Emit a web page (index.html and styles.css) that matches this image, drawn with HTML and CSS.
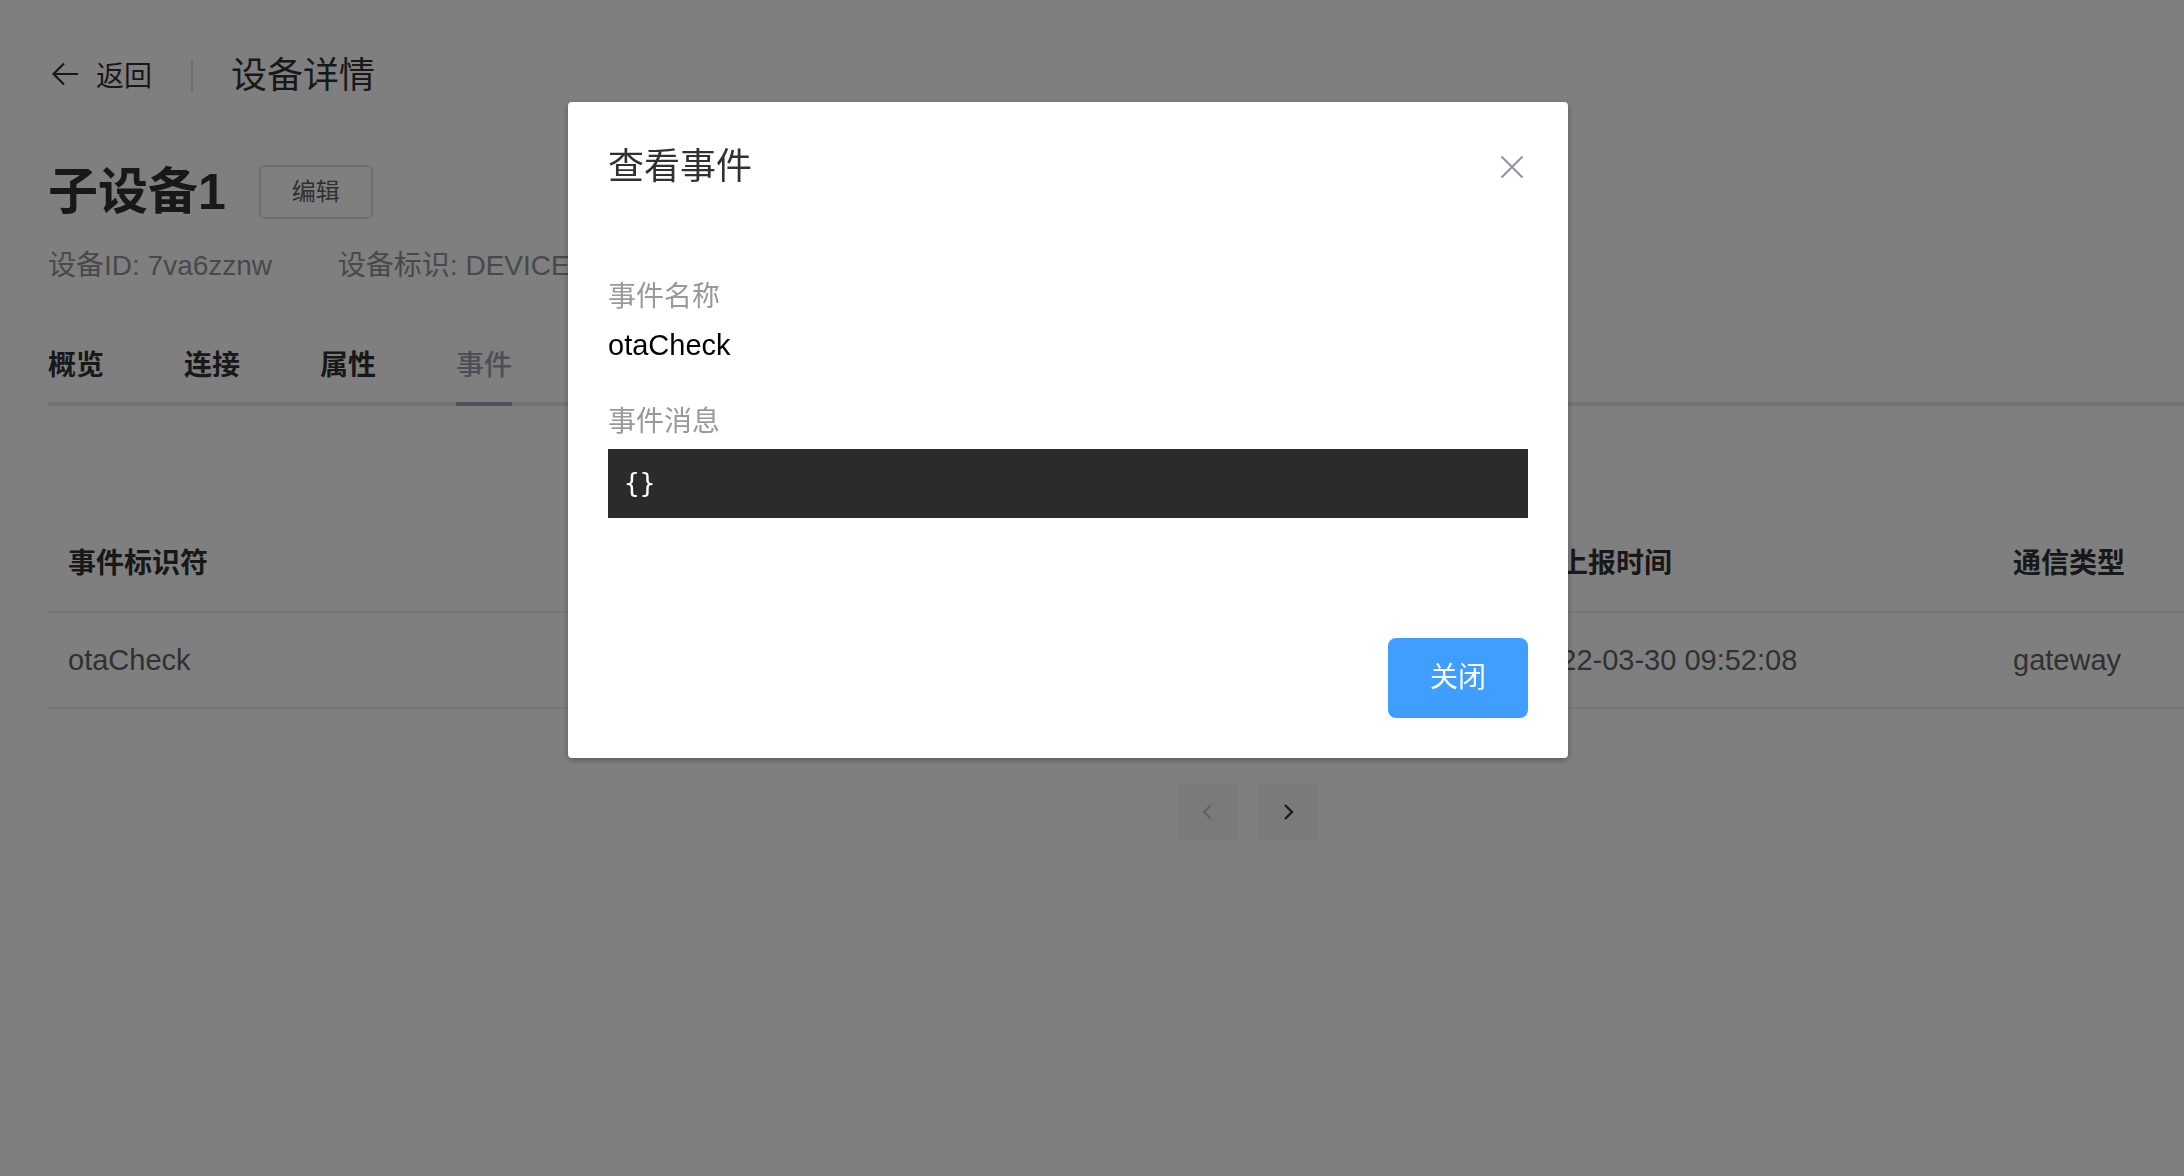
FILE: index.html
```html
<!DOCTYPE html>
<html lang="zh-CN">
<head>
  <meta charset="utf-8">
  <title>设备详情</title>
  <link rel="stylesheet" href="styles.css">
</head>
<body>

  <div class="page">
    <div class="page-header">
      <a class="back">
        <svg class="back-icon" width="36" height="36" viewBox="0 0 36 36">
          <path d="M30 18H6M16 7.5L5.5 18 16 28.5" fill="none" stroke="#303133" stroke-width="2.2"/>
        </svg>
        <span>返回</span>
      </a>
      <span class="divider"></span>
      <span class="page-title">设备详情</span>
    </div>

    <div class="device-head">
      <h1 class="device-name">子设备1</h1>
      <button class="btn-mini">编辑</button>
    </div>
    <div class="device-meta">
      <span>设备ID: 7va6zznw</span>
      <span>设备标识: DEVICE1</span>
    </div>

    <div class="tabs">
      <div class="tab"><span>概览</span></div>
      <div class="tab"><span>连接</span></div>
      <div class="tab"><span>属性</span></div>
      <div class="tab active"><span>事件</span></div>
    </div>

    <div class="table">
      <div class="row head">
        <div class="cell">事件标识符</div>
        <div class="cell">事件名称</div>
        <div class="cell">事件消息</div>
        <div class="cell time-head">上报时间</div>
        <div class="cell">通信类型</div>
      </div>
      <div class="row">
        <div class="cell">otaCheck</div>
        <div class="cell">otaCheck</div>
        <div class="cell">{}</div>
        <div class="cell">2022-03-30 09:52:08</div>
        <div class="cell">gateway</div>
      </div>
    </div>

    <div class="pager">
      <button class="pager-btn disabled">
        <svg width="16" height="20" viewBox="0 0 16 20"><path d="M11 3L4 10l7 7" fill="none" stroke="#c0c4cc" stroke-width="2.2"/></svg>
      </button>
      <button class="pager-btn">
        <svg width="16" height="20" viewBox="0 0 16 20"><path d="M5 3l7 7-7 7" fill="none" stroke="#303133" stroke-width="2.2"/></svg>
      </button>
    </div>
  </div>

  <!-- 查看事件弹窗 -->
  <div class="overlay">
    <div class="dialog">
      <div class="dialog-header">
        <span class="dialog-title">查看事件</span>
        <svg class="dialog-close" width="32" height="32" viewBox="0 0 32 32">
          <path d="M5.5 5.5l21 21M26.5 5.5l-21 21" stroke="#909399" stroke-width="2"/>
        </svg>
      </div>
      <div class="dialog-body">
        <div class="field-label">事件名称</div>
        <div class="field-value">otaCheck</div>
        <div class="field-label second">事件消息</div>
        <pre class="code">{}</pre>
      </div>
      <div class="dialog-footer">
        <button class="btn-primary">关闭</button>
      </div>
    </div>
  </div>

</body>
</html>
```

FILE: styles.css
```css
body {
  margin: 0;
  background: #fff;
  color: #303133;
  font-family: "Liberation Sans", "Noto Sans CJK SC", sans-serif;
  overflow: hidden;
}
.page {
  width: 2400px;
  padding: 52px 0 0 48px;
}

/* page header */
.page-header {
  display: flex;
  align-items: center;
  height: 48px;
}
.back {
  display: flex;
  align-items: center;
  margin-bottom: 5px;
  font-size: 28px;
  color: #303133;
}
.back-icon {
  margin-right: 12px;
}
.divider {
  width: 2px;
  height: 32px;
  background: #dcdfe6;
  margin: 0 38px 0 39px;
}
.page-title {
  font-size: 36px;
  line-height: 48px;
}

/* device info */
.device-head {
  display: flex;
  align-items: center;
  height: 64px;
  margin-top: 60px;
}
.device-name {
  margin: 0 33px 0 0;
  font-size: 50px;
  line-height: 64px;
  font-weight: bold;
}
.btn-mini {
  font-family: inherit;
  font-size: 24px;
  line-height: 24px;
  padding: 13px 31px;
  border: 2px solid #dcdfe6;
  border-radius: 6px;
  background: #fff;
  color: #606266;
}
.device-meta {
  margin-top: 21px;
  font-size: 28px;
  line-height: 42px;
  color: #909399;
}
.device-meta span {
  margin-right: 58px;
}

/* tabs */
.tabs {
  display: flex;
  height: 80px;
  margin-top: 39px;
  box-shadow: inset 0 -4px 0 #e4e7ed;
}
.tab {
  padding: 0 40px;
  font-size: 28px;
  font-weight: bold;
  line-height: 80px;
}
.tab:first-child {
  padding-left: 0;
}
.tab span {
  display: inline-block;
  height: 80px;
}
.tab.active {
  color: #97a0b0;
  font-weight: 500;
}
.tab.active span {
  box-shadow: inset 0 -4px 0 #98a2b2;
}

/* table */
.table {
  margin-top: 111px;
}
.row {
  display: grid;
  grid-template-columns: 600px 400px 460px 485px 407px;
  border-bottom: 2px solid #ebeef5;
  font-size: 29px;
  color: #606266;
}
.row.head {
  font-size: 28px;
  color: #303133;
  font-weight: bold;
}
.cell {
  padding: 24px 20px;
  line-height: 46px;
  white-space: nowrap;
}
.cell.time-head {
  padding-left: 52px;
}

/* pagination */
.pager {
  display: flex;
  justify-content: center;
  gap: 20px;
  margin-top: 75px;
}
.pager-btn {
  width: 60px;
  height: 56px;
  border: none;
  border-radius: 4px;
  background: #f4f4f5;
  display: flex;
  align-items: center;
  justify-content: center;
}

/* dialog */
.overlay {
  position: fixed;
  top: 0;
  left: 0;
  right: 0;
  bottom: 0;
  background: rgba(0, 0, 0, 0.5);
  padding: 102px 0 0 568px;
}
.dialog {
  width: 1000px;
  background: #fff;
  border-radius: 4px;
  box-shadow: 0 2px 6px rgba(0, 0, 0, 0.3);
}
.dialog-header {
  display: flex;
  align-items: center;
  justify-content: space-between;
  padding: 41px 40px 19px;
}
.dialog-title {
  font-size: 36px;
  line-height: 48px;
  color: #303133;
}
.dialog-body {
  padding: 66px 40px 100px;
  font-size: 28px;
}
.field-label {
  line-height: 42px;
  color: #999;
}
.field-label.second {
  margin-top: 35px;
}
.field-value {
  margin-top: 6px;
  font-size: 29px;
  line-height: 42px;
  color: #000;
}
.code {
  margin: 6px 0 0;
  padding: 15px 16px;
  background: #2b2b2b;
  color: #fff;
  font-family: "DejaVu Sans Mono", "Liberation Mono", monospace;
  font-size: 26px;
  line-height: 39px;
}
.dialog-footer {
  padding: 20px 40px 40px;
  text-align: right;
}
.btn-primary {
  font-family: inherit;
  font-size: 28px;
  line-height: 28px;
  padding: 24px 40px;
  border: 2px solid #409eff;
  border-radius: 8px;
  background: #409eff;
  color: #fff;
}
```
